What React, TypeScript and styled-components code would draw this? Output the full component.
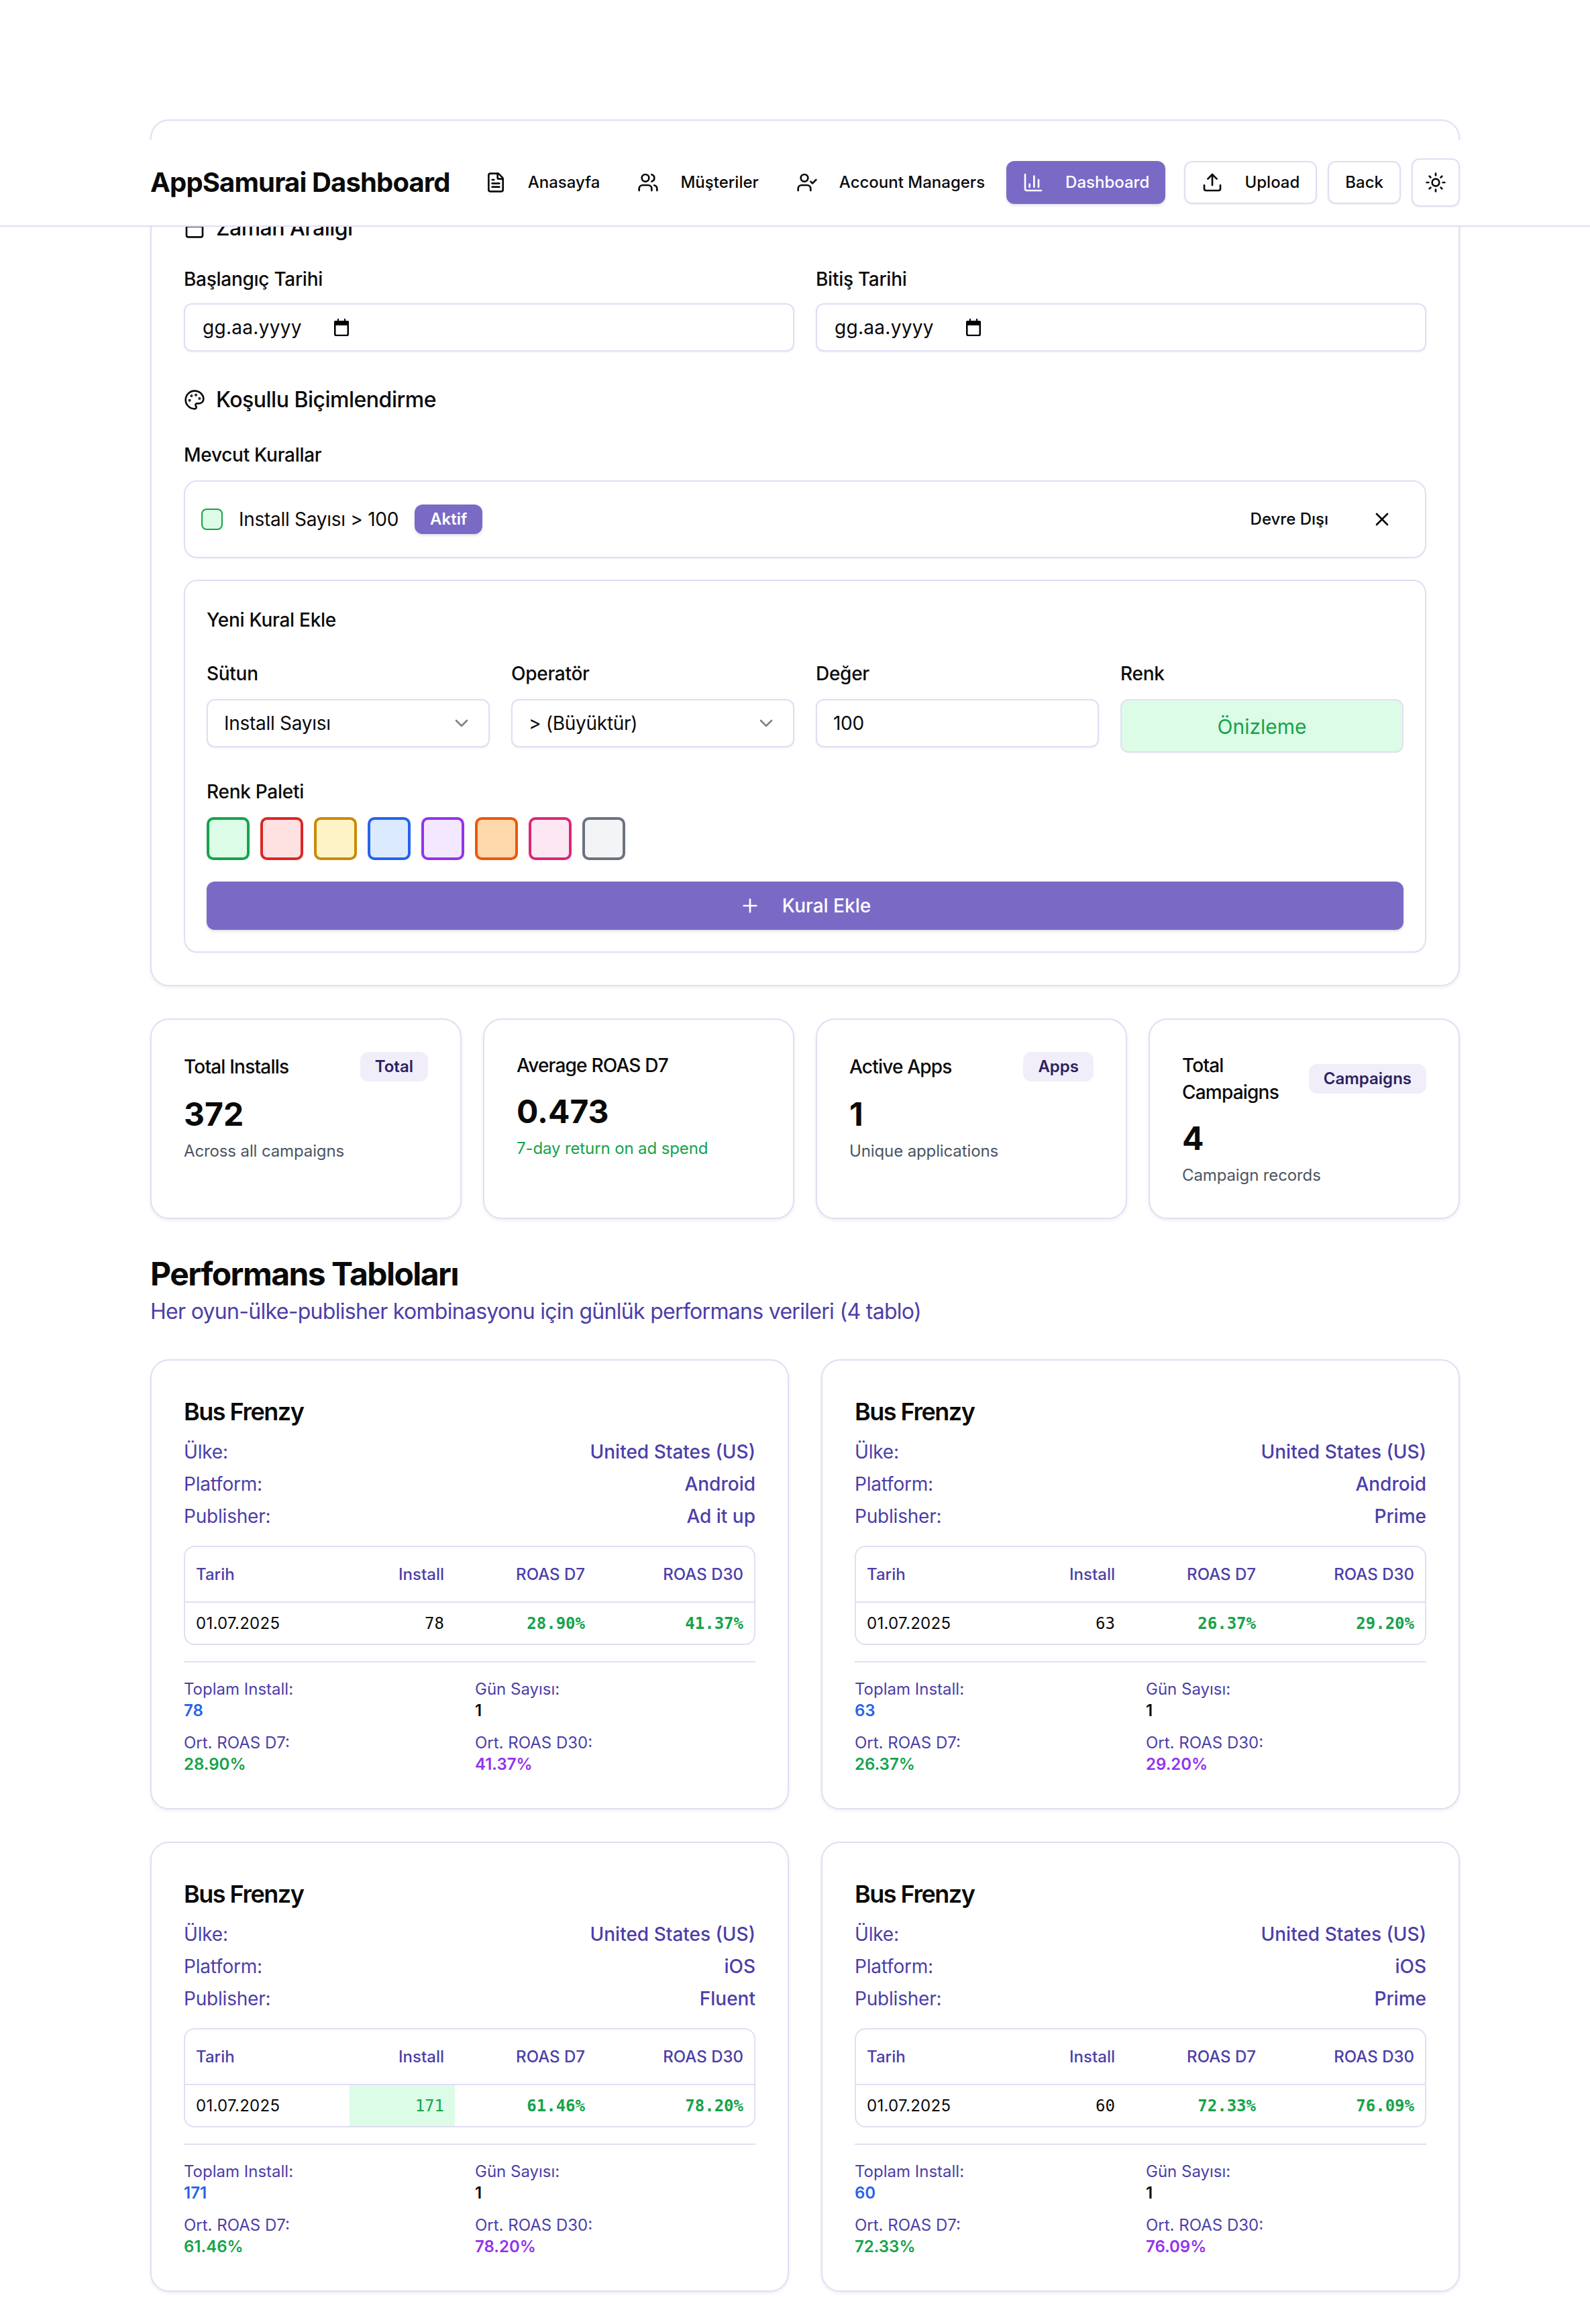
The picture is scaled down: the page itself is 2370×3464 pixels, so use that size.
import React from 'react';
import styled, { createGlobalStyle } from 'styled-components';
import { BarChart3, Calendar, ChevronDown, FileText, Palette, Plus, Sun, Upload, UserCheck, Users, X } from 'lucide-react';

const BORDER = '#e1def4';
const PRIMARY = '#7a6ac6';
const INDIGO = '#4c3ea9';
const GREEN = '#16a34a';

const GlobalStyle = createGlobalStyle`
  body {
    margin: 0;
    background: #fff;
    color: #0a0a0a;
    font-family: Inter, "Liberation Sans", sans-serif;
    font-size: 28px;
    line-height: 40px;
  }
  * { box-sizing: border-box; }
`;

const Page = styled.div`
  position: relative;
  padding: 178px 194px 48px 224px;
`;

const Header = styled.header`
  position: absolute;
  top: 208px;
  left: 0;
  right: 0;
  height: 130px;
  padding: 0 194px 0 224px;
  display: flex;
  align-items: center;
  background: #fff;
  border-bottom: 2px solid ${BORDER};
  z-index: 5;
`;

const Brand = styled.div`
  font-size: 40px;
  line-height: 56px;
  font-weight: 700;
  letter-spacing: -0.85px;
  margin-right: 28px;
  white-space: nowrap;
`;

const NavList = styled.nav`
  display: flex;
  align-items: center;
  gap: 8px;
  flex: 1;
`;

const NavItem = styled.div<{ $active?: boolean }>`
  display: flex;
  align-items: center;
  gap: 32px;
  height: 64px;
  padding: 0 24px;
  border-radius: 12px;
  font-size: 24px;
  font-weight: 500;
  white-space: nowrap;
  color: ${({ $active }) => ($active ? '#fff' : '#0a0a0a')};
  background: ${({ $active }) => ($active ? PRIMARY : 'transparent')};
  box-shadow: ${({ $active }) => ($active ? '0 2px 4px rgba(30, 20, 80, 0.15)' : 'none')};
`;

const Actions = styled.div`
  display: flex;
  align-items: center;
  gap: 16px;
`;

const OutlineButton = styled.div<{ $square?: boolean }>`
  display: flex;
  align-items: center;
  justify-content: center;
  gap: 32px;
  height: ${({ $square }) => ($square ? '72px' : '64px')};
  width: ${({ $square }) => ($square ? '72px' : 'auto')};
  padding: ${({ $square }) => ($square ? '0' : '0 24px')};
  background: #fff;
  border: 2px solid ${BORDER};
  border-radius: 12px;
  font-size: 24px;
  font-weight: 500;
  box-shadow: 0 1px 3px rgba(30, 20, 80, 0.08);
`;

const FilterCard = styled.section`
  border: 2px solid ${BORDER};
  border-radius: 28px;
  padding: 136px 48px 48px;
  box-shadow: 0 2px 5px rgba(30, 20, 80, 0.08);
`;

const SectionTitle = styled.h3<{ $top?: number; $bottom: number }>`
  display: flex;
  align-items: center;
  gap: 16px;
  margin: ${({ $top }) => $top ?? 0}px 0 ${({ $bottom }) => $bottom}px;
  font-size: 32px;
  line-height: 48px;
  font-weight: 500;
  letter-spacing: -0.5px;
`;

const TwoColumns = styled.div`
  display: grid;
  grid-template-columns: 1fr 1fr;
  gap: 32px;
`;

const Field = styled.div`
  display: flex;
  flex-direction: column;
`;

const Label = styled.div<{ $gap?: number }>`
  font-size: 28px;
  line-height: 40px;
  font-weight: 500;
  letter-spacing: -0.28px;
  margin-bottom: ${({ $gap }) => $gap ?? 18}px;
`;

const Control = styled.div`
  display: flex;
  align-items: center;
  justify-content: space-between;
  height: 72px;
  padding: 0 24px;
  background: #fff;
  border: 2px solid ${BORDER};
  border-radius: 12px;
  font-size: 28px;
  letter-spacing: -0.28px;
  box-shadow: 0 1px 3px rgba(30, 20, 80, 0.08);
  svg { opacity: 0.5; }
`;

const DateControl = styled(Control)`
  justify-content: flex-start;
  gap: 48px;
  padding: 0 26px;
  letter-spacing: 0.3px;
  svg { opacity: 1; }
`;

const RuleBox = styled.div`
  display: flex;
  align-items: center;
  height: 116px;
  padding: 0 24px;
  border: 2px solid ${BORDER};
  border-radius: 20px;
  box-shadow: 0 1px 2px rgba(30, 20, 80, 0.05);
`;

const RuleSwatch = styled.div`
  width: 32px;
  height: 32px;
  margin-right: 24px;
  background: #dcfce7;
  border: 2px solid ${GREEN};
  border-radius: 8px;
`;

const RuleText = styled.span`
  margin-right: 24px;
  letter-spacing: -0.28px;
`;

const ActiveBadge = styled.span`
  display: flex;
  align-items: center;
  height: 44px;
  padding: 0 23px;
  border-radius: 12px;
  background: ${PRIMARY};
  color: #fff;
  font-size: 24px;
  font-weight: 600;
  box-shadow: 0 2px 4px rgba(30, 20, 80, 0.15);
`;

const RuleActions = styled.div`
  display: flex;
  align-items: center;
  gap: 64px;
  margin-left: auto;
  padding-right: 24px;
  font-size: 24px;
  font-weight: 500;
`;

const NewRuleBox = styled.div`
  margin-top: 32px;
  padding: 32px;
  border: 2px solid ${BORDER};
  border-radius: 20px;
  box-shadow: 0 1px 2px rgba(30, 20, 80, 0.05);
`;

const NewRuleTitle = styled.div`
  font-size: 28px;
  line-height: 52px;
  font-weight: 500;
  letter-spacing: -0.28px;
  margin-bottom: 34px;
`;

const FourColumns = styled.div`
  display: grid;
  grid-template-columns: repeat(4, 1fr);
  gap: 32px;
  align-items: start;
`;

const Preview = styled.div`
  display: flex;
  align-items: center;
  justify-content: center;
  height: 80px;
  padding-top: 2px;
  background: #dcfce7;
  border: 2px solid ${BORDER};
  border-radius: 12px;
  color: ${GREEN};
  font-size: 30px;
`;

const PaletteBlock = styled.div`
  margin-top: 38px;
`;

const SwatchRow = styled.div`
  display: flex;
  gap: 16px;
`;

const Swatch = styled.div<{ $bg: string; $edge: string }>`
  width: 64px;
  height: 64px;
  background: ${({ $bg }) => $bg};
  border: 4px solid ${({ $edge }) => $edge};
  border-radius: 10px;
`;

const AddButton = styled.div`
  display: flex;
  align-items: center;
  justify-content: center;
  gap: 32px;
  height: 72px;
  margin-top: 32px;
  border-radius: 12px;
  background: ${PRIMARY};
  color: #fff;
  font-size: 28px;
  font-weight: 500;
  box-shadow: 0 2px 4px rgba(30, 20, 80, 0.15);
`;

const StatGrid = styled.div`
  display: grid;
  grid-template-columns: repeat(4, 1fr);
  gap: 32px;
  margin-top: 48px;
`;

const StatCard = styled.div`
  height: 299px;
  padding: 48px;
  background: #fff;
  border: 2px solid ${BORDER};
  border-radius: 28px;
  box-shadow: 0 2px 5px rgba(30, 20, 80, 0.08);
`;

const StatHead = styled.div`
  display: flex;
  align-items: center;
  justify-content: space-between;
  gap: 16px;
  margin-bottom: 17px;
  font-size: 28px;
  line-height: 40px;
  font-weight: 500;
  letter-spacing: -0.8px;
`;

const StatTag = styled.span`
  display: flex;
  align-items: center;
  flex-shrink: 0;
  height: 44px;
  padding: 0 22px;
  border-radius: 12px;
  background: #f1eefa;
  color: #2a2260;
  font-size: 24px;
  font-weight: 600;
  letter-spacing: 0;
`;

const StatValue = styled.div`
  font-size: 48px;
  line-height: 64px;
  font-weight: 700;
`;

const StatNote = styled.div<{ $good?: boolean }>`
  margin-top: 7px;
  font-size: 24px;
  line-height: 32px;
  letter-spacing: -0.12px;
  color: ${({ $good }) => ($good ? GREEN : '#4b5563')};
`;

const Heading = styled.h2`
  margin: 50px 0 0;
  font-size: 48px;
  line-height: 64px;
  font-weight: 700;
  letter-spacing: -1.55px;
`;

const Subheading = styled.p`
  margin: 0;
  font-size: 32px;
  line-height: 48px;
  letter-spacing: -0.7px;
  color: ${INDIGO};
`;

const TableGrid = styled.div`
  display: grid;
  grid-template-columns: 1fr 1fr;
  gap: 48px;
  margin-top: 47px;
`;

const TableCard = styled.article`
  padding: 48px 48px 49px;
  background: #fff;
  border: 2px solid ${BORDER};
  border-radius: 28px;
  box-shadow: 0 2px 5px rgba(30, 20, 80, 0.08);
`;

const GameTitle = styled.h4`
  margin: 0 0 12px;
  font-size: 36px;
  line-height: 56px;
  font-weight: 600;
  letter-spacing: -1.5px;
`;

const MetaRow = styled.div`
  display: flex;
  justify-content: space-between;
  margin-bottom: 8px;
  color: ${INDIGO};
`;

const MetaLabel = styled.span`
  letter-spacing: -0.2px;
`;

const MetaValue = styled.span`
  font-weight: 500;
`;

const TableWrap = styled.div`
  margin-top: 24px;
  border: 2px solid ${BORDER};
  border-radius: 16px;
  overflow: hidden;
`;

const Table = styled.table`
  width: 100%;
  table-layout: fixed;
  border-collapse: collapse;
`;

const Th = styled.th<{ $width: number; $left?: boolean }>`
  width: ${({ $width }) => $width}px;
  height: 82px;
  padding: 0 16px;
  text-align: ${({ $left }) => ($left ? 'left' : 'right')};
  font-size: 24px;
  font-weight: 500;
  color: ${INDIGO};
  border-bottom: 2px solid ${BORDER};
`;

const Td = styled.td<{ $left?: boolean; $mono?: boolean; $strong?: boolean; $hit?: boolean }>`
  height: 62px;
  padding: 0 16px;
  text-align: ${({ $left }) => ($left ? 'left' : 'right')};
  font-size: 24px;
  letter-spacing: ${({ $left }) => ($left ? '0.3px' : '0')};
  font-family: ${({ $mono }) => ($mono ? '"DejaVu Sans Mono", monospace' : 'inherit')};
  font-weight: ${({ $strong }) => ($strong ? 700 : 400)};
  color: ${({ $strong, $hit }) => ($strong || $hit ? GREEN : '#0a0a0a')};
  background: ${({ $hit }) => ($hit ? '#dcfce7' : 'transparent')};
`;

const Divider = styled.hr`
  height: 2px;
  margin: 24px 0;
  border: 0;
  background: ${BORDER};
`;

const Summary = styled.div`
  display: grid;
  grid-template-columns: 1fr 1fr;
  gap: 16px;
  font-size: 24px;
  line-height: 32px;
`;

const SummaryLabel = styled.div`
  color: ${INDIGO};
`;

const SummaryValue = styled.div<{ $color: string }>`
  font-weight: 600;
  color: ${({ $color }) => $color};
`;

const NAV = [
  { label: 'Anasayfa', Icon: FileText },
  { label: 'Müşteriler', Icon: Users },
  { label: 'Account Managers', Icon: UserCheck },
  { label: 'Dashboard', Icon: BarChart3, active: true },
];

const SWATCHES = [
  ['#dcfce7', '#16a34a'],
  ['#fee2e2', '#dc2626'],
  ['#fef3c7', '#ca8a04'],
  ['#dbeafe', '#2563eb'],
  ['#f3e8ff', '#9333ea'],
  ['#fed7aa', '#ea580c'],
  ['#fce7f3', '#db2777'],
  ['#f3f4f6', '#6b7280'],
];

const STATS = [
  { title: 'Total Installs', tag: 'Total', value: '372', note: 'Across all campaigns' },
  { title: 'Average ROAS D7', value: '0.473', note: '7-day return on ad spend', good: true },
  { title: 'Active Apps', tag: 'Apps', value: '1', note: 'Unique applications' },
  { title: 'Total Campaigns', tag: 'Campaigns', value: '4', note: 'Campaign records' },
];

const TABLES = [
  { platform: 'Android', publisher: 'Ad it up', install: '78', d7: '28.90%', d30: '41.37%' },
  { platform: 'Android', publisher: 'Prime', install: '63', d7: '26.37%', d30: '29.20%' },
  { platform: 'iOS', publisher: 'Fluent', install: '171', d7: '61.46%', d30: '78.20%', hit: true },
  { platform: 'iOS', publisher: 'Prime', install: '60', d7: '72.33%', d30: '76.09%' },
];

const DateIcon = () => (
  <svg width="22" height="26" viewBox="0 0 22 26" fill="none">
    <path d="M5 0h2v3h8V0h2v3h3a2 2 0 0 1 2 2v0H0v0a2 2 0 0 1 2-2h3z" fill="#000" />
    <rect x="0" y="4" width="22" height="6" fill="#000" />
    <rect x="1.25" y="5" width="19.5" height="20" rx="2" stroke="#000" strokeWidth="2.5" />
  </svg>
);

const DateField = ({ label }: { label: string }) => (
  <Field>
    <Label $gap={16}>{label}</Label>
    <DateControl>
      gg.aa.yyyy
      <DateIcon />
    </DateControl>
  </Field>
);

const App = () => (
  <Page>
    <GlobalStyle />
    <Header>
      <Brand>AppSamurai Dashboard</Brand>
      <NavList>
        {NAV.map(({ label, Icon, active }) => (
          <NavItem key={label} $active={active}>
            <Icon size={32} />
            {label}
          </NavItem>
        ))}
      </NavList>
      <Actions>
        <OutlineButton>
          <Upload size={32} />
          Upload
        </OutlineButton>
        <OutlineButton>Back</OutlineButton>
        <OutlineButton $square>
          <Sun size={32} />
        </OutlineButton>
      </Actions>
    </Header>

    <FilterCard>
      <SectionTitle $bottom={32}>
        <Calendar size={32} />
        Zaman Aralığı
      </SectionTitle>
      <TwoColumns>
        <DateField label="Başlangıç Tarihi" />
        <DateField label="Bitiş Tarihi" />
      </TwoColumns>

      <SectionTitle $top={48} $bottom={38}>
        <Palette size={32} />
        Koşullu Biçimlendirme
      </SectionTitle>
      <Label>Mevcut Kurallar</Label>
      <RuleBox>
        <RuleSwatch />
        <RuleText>Install Sayısı &gt; 100</RuleText>
        <ActiveBadge>Aktif</ActiveBadge>
        <RuleActions>
          Devre Dışı
          <X size={32} />
        </RuleActions>
      </RuleBox>

      <NewRuleBox>
        <NewRuleTitle>Yeni Kural Ekle</NewRuleTitle>
        <FourColumns>
          <Field>
            <Label>Sütun</Label>
            <Control>
              Install Sayısı
              <ChevronDown size={32} />
            </Control>
          </Field>
          <Field>
            <Label>Operatör</Label>
            <Control>
              &gt; (Büyüktür)
              <ChevronDown size={32} />
            </Control>
          </Field>
          <Field>
            <Label>Değer</Label>
            <Control>100</Control>
          </Field>
          <Field>
            <Label>Renk</Label>
            <Preview>Önizleme</Preview>
          </Field>
        </FourColumns>
        <PaletteBlock>
          <Label>Renk Paleti</Label>
          <SwatchRow>
            {SWATCHES.map(([bg, edge]) => (
              <Swatch key={edge} $bg={bg} $edge={edge} />
            ))}
          </SwatchRow>
        </PaletteBlock>
        <AddButton>
          <Plus size={32} />
          Kural Ekle
        </AddButton>
      </NewRuleBox>
    </FilterCard>

    <StatGrid>
      {STATS.map((stat) => (
        <StatCard key={stat.title}>
          <StatHead>
            <span>{stat.title}</span>
            {stat.tag && <StatTag>{stat.tag}</StatTag>}
          </StatHead>
          <StatValue>{stat.value}</StatValue>
          <StatNote $good={stat.good}>{stat.note}</StatNote>
        </StatCard>
      ))}
    </StatGrid>

    <Heading>Performans Tabloları</Heading>
    <Subheading>Her oyun-ülke-publisher kombinasyonu için günlük performans verileri (4 tablo)</Subheading>

    <TableGrid>
      {TABLES.map((row) => (
        <TableCard key={row.install}>
          <GameTitle>Bus Frenzy</GameTitle>
          <MetaRow>
            <MetaLabel>Ülke:</MetaLabel>
            <MetaValue>United States (US)</MetaValue>
          </MetaRow>
          <MetaRow>
            <MetaLabel>Platform:</MetaLabel>
            <MetaValue>{row.platform}</MetaValue>
          </MetaRow>
          <MetaRow>
            <MetaLabel>Publisher:</MetaLabel>
            <MetaValue>{row.publisher}</MetaValue>
          </MetaRow>
          <TableWrap>
            <Table>
              <thead>
                <tr>
                  <Th $width={245} $left>Tarih</Th>
                  <Th $width={157}>Install</Th>
                  <Th $width={210}>ROAS D7</Th>
                  <Th $width={236}>ROAS D30</Th>
                </tr>
              </thead>
              <tbody>
                <tr>
                  <Td $left>01.07.2025</Td>
                  <Td $mono $hit={row.hit}>{row.install}</Td>
                  <Td $mono $strong>{row.d7}</Td>
                  <Td $mono $strong>{row.d30}</Td>
                </tr>
              </tbody>
            </Table>
          </TableWrap>
          <Divider />
          <Summary>
            <div>
              <SummaryLabel>Toplam Install:</SummaryLabel>
              <SummaryValue $color="#2563eb">{row.install}</SummaryValue>
            </div>
            <div>
              <SummaryLabel>Gün Sayısı:</SummaryLabel>
              <SummaryValue $color="#0a0a0a">1</SummaryValue>
            </div>
            <div>
              <SummaryLabel>Ort. ROAS D7:</SummaryLabel>
              <SummaryValue $color={GREEN}>{row.d7}</SummaryValue>
            </div>
            <div>
              <SummaryLabel>Ort. ROAS D30:</SummaryLabel>
              <SummaryValue $color="#9333ea">{row.d30}</SummaryValue>
            </div>
          </Summary>
        </TableCard>
      ))}
    </TableGrid>
  </Page>
);

export default App;
